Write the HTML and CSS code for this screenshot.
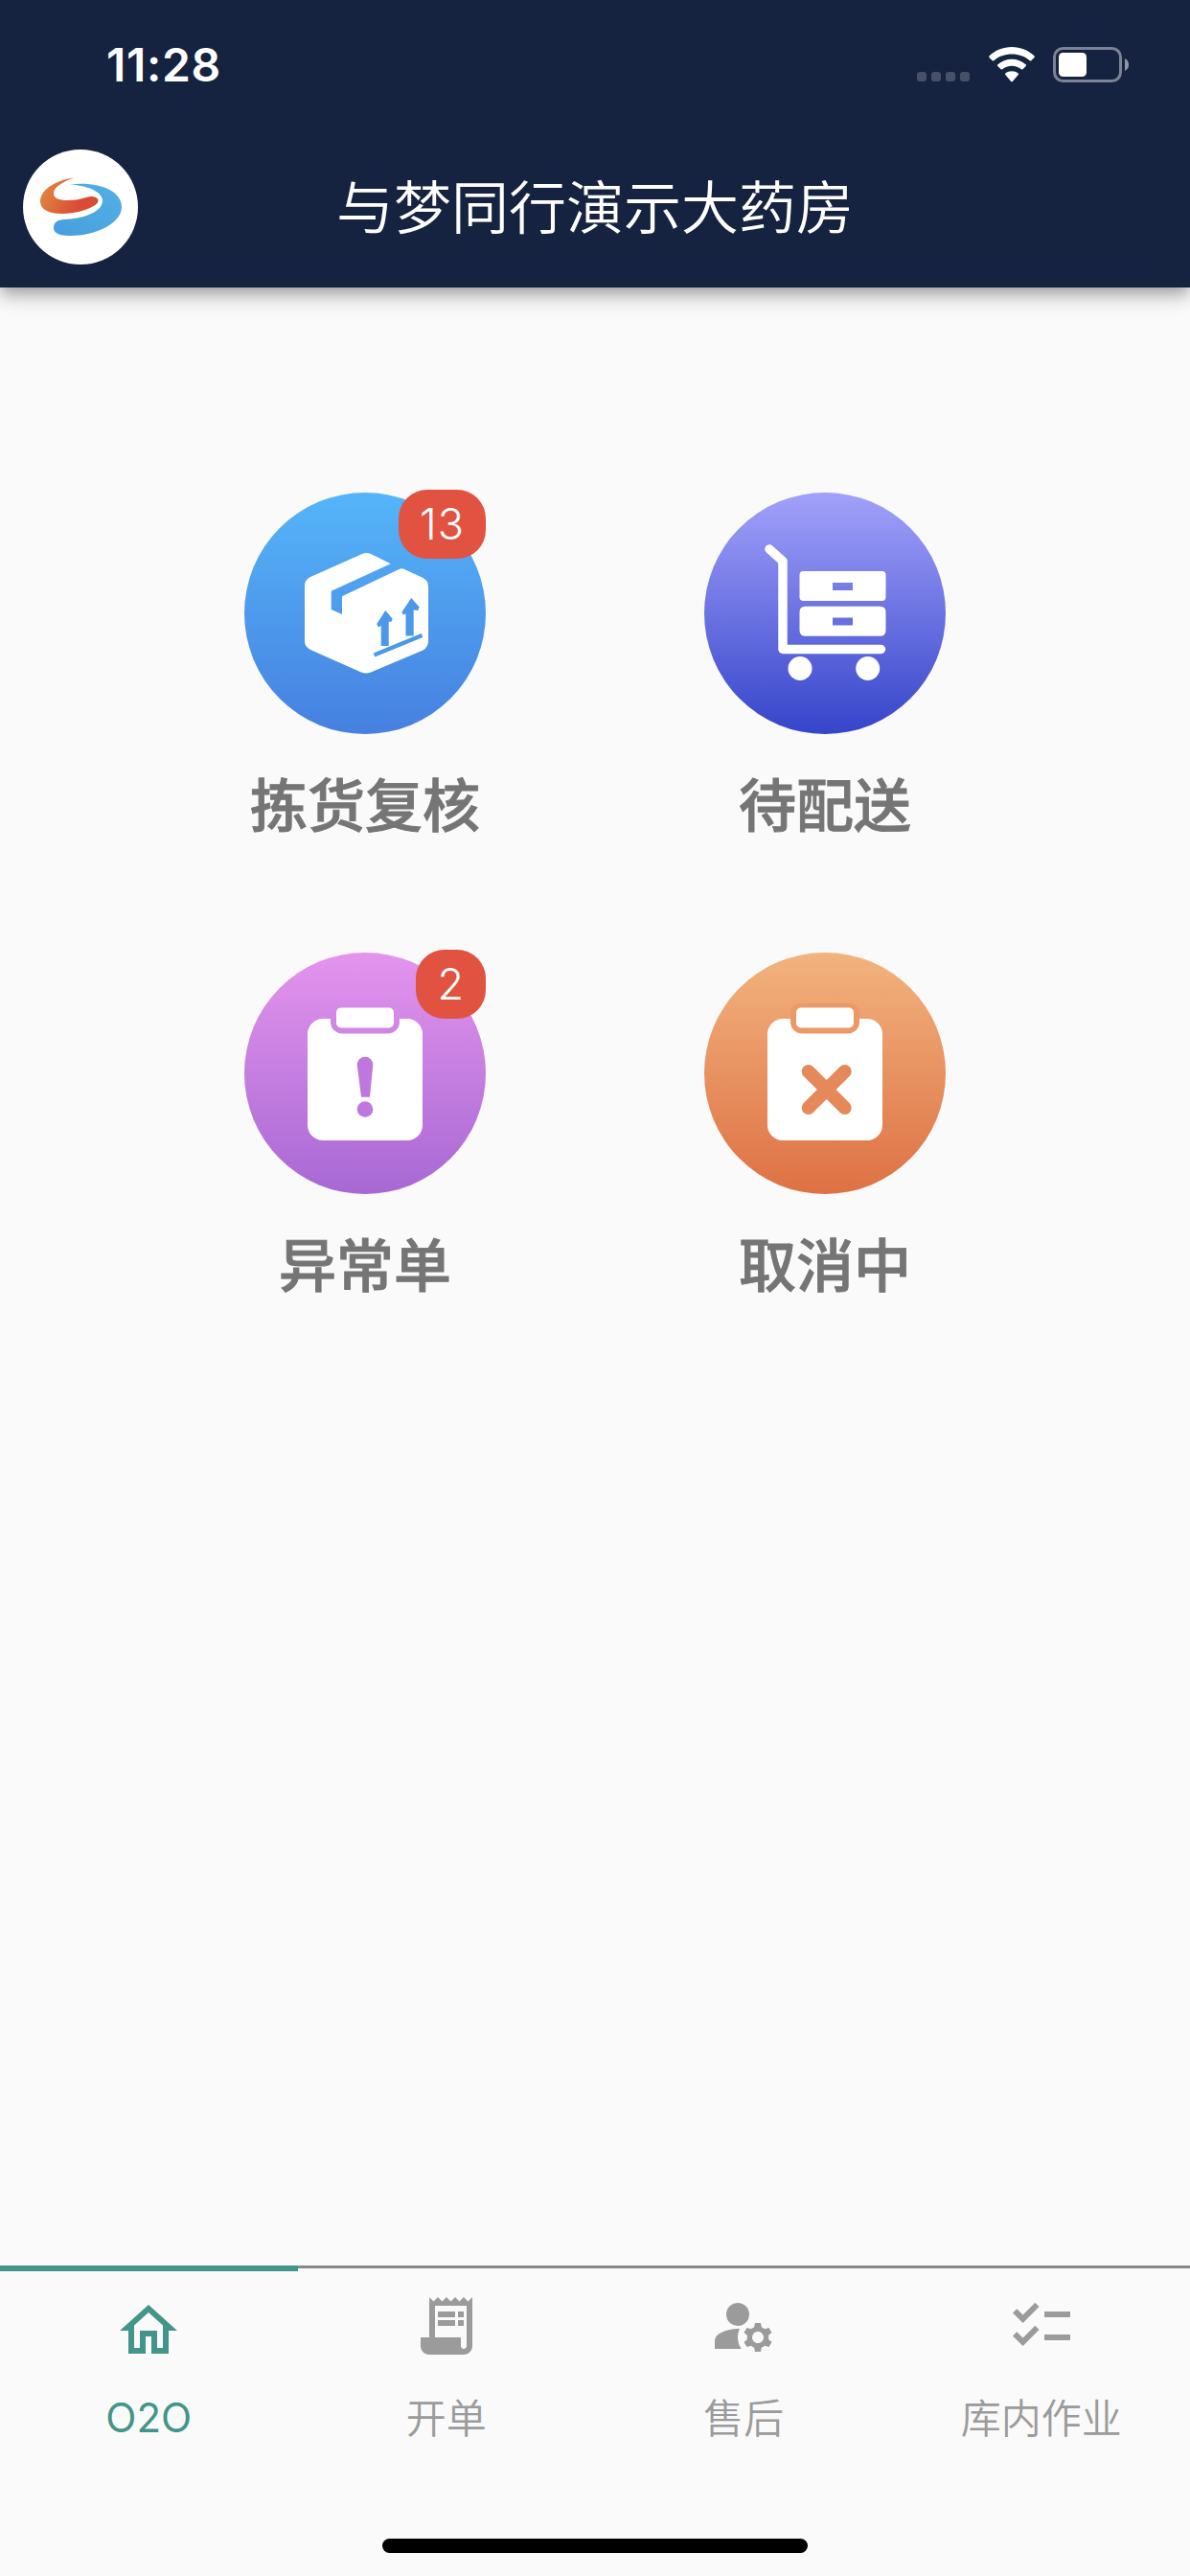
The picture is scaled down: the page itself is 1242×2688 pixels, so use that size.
FILE: index.html
```html
<!DOCTYPE html>
<html lang="zh-CN">
<head>
<meta charset="utf-8">
<title>与梦同行演示大药房</title>
<link rel="stylesheet" href="styles.css">
</head>
<body>
<div class="app">
  <header class="header">
    <div class="status">
      <span class="time">11:28</span>
      <div class="status-icons">
        <svg class="dots" width="56" height="38" viewBox="0 0 56 38"><g fill="#475069"><rect x="0" y="26" width="10" height="10" rx="3"/><rect x="15" y="26" width="10" height="10" rx="3"/><rect x="30" y="26" width="10" height="10" rx="3"/><rect x="45" y="26" width="10" height="10" rx="3"/></g></svg>
        <svg class="wifi" width="48" height="38" viewBox="0 0 48 38" fill="#fff"><path d="M24 0C33 0 41.500 3.600 47.400 9.300c.6.600.6 1 .1 1.600l-3.200 3.300c-.5.500-1 .5-1.500 0C37.700 9.500 31 7.400 24 7.400S10.300 9.500 5.200 14.200c-.5.500-1 .5-1.500 0L.5 10.900c-.5-.6-.5-1 .1-1.600C6.500 3.600 15 0 24 0z"/><path d="M24 12.700c5.500 0 10.600 2 14.600 5.600.6.600.6 1.100.1 1.600l-3.300 3.300c-.5.500-1 .5-1.600 0C31.200 21 27.700 19.800 24 19.800s-7.200 1.200-9.800 3.400c-.6.500-1.100.5-1.600 0l-3.300-3.300c-.5-.5-.5-1 .1-1.600 4-3.600 9.100-5.600 14.600-5.600z"/><path d="M24 25.200c2.500 0 4.800.8 6.600 2.300.6.500.5 1.100.1 1.600l-5.700 6.600c-.6.700-1.400.7-2 0l-5.700-6.600c-.4-.5-.5-1.100.1-1.600 1.800-1.500 4.100-2.300 6.600-2.300z"/></svg>
        <svg class="battery" width="80" height="38" viewBox="0 0 80 38"><rect x="1.500" y="1.500" width="69" height="34" rx="9" fill="none" stroke="#7b8394" stroke-width="3"/><rect x="6" y="6" width="29" height="25" rx="4.500" fill="#fff"/><path d="M75 12v13q4-2 4-6.500T75 12z" fill="#8f96a3"/></svg>
      </div>
    </div>
    <div class="toolbar">
      <svg class="logo" width="120" height="120" viewBox="0 0 120 120">
        <defs>
          <linearGradient id="flame" x1="0" x2="1" y1=".3" y2=".6"><stop offset=".1" stop-color="#e0803f"/><stop offset=".75" stop-color="#d94b35"/></linearGradient>
          <linearGradient id="wave" x1="1" x2="0" y1="0" y2="1"><stop stop-color="#54b0e2"/><stop offset="1" stop-color="#479ee0"/></linearGradient>
        </defs>
        <circle cx="60" cy="60" r="60" fill="#fff"/>
        <path d="M53 29.500C31 33 18 43 18 54.500c0 8 9 12.500 23 12.500 13 0 26-4 33.500-8.500C82 54 78 49 71 49c-5 0-10 4-25 4-9 0-14-2-14-7.500C32 39 43 33 53 29.500z" fill="url(#flame)"/>
        <path d="M49 36.500C79 33 103 43 103 60c0 17-27 30-54 30-12 0-17-3-17-8.500 0-5 4-8.500 11-8.500 18-.5 39-7 40-19C83.500 45 70 38 49 36.500z" fill="url(#wave)"/>
      </svg>
      <h1 class="title">与梦同行演示大药房</h1>
    </div>
  </header>

  <main class="grid">
    <a class="tile">
      <span class="disc disc-blue">
        <svg width="252" height="252" viewBox="0 0 252 252">
          <path fill="#fff" d="M123 64q4-2 9 0l20.700 10.300-62 28.400V122l11.300 5v-18.700l60-28.600q2-1 4.500 0L186.500 89q5.500 3 5.500 9v57q0 6-5.500 9.500L132 187.500q-5 2-10 0L69 164q-6-3-6-9V97q0-6 6-9z"/>
          <path fill="#4c98ea" d="M147.300 123l7.400 8.700-1.500 3.300-2.500-.5V160h-8v-21l-3 1.500-1.500-3.500zM174.300 110l8.400 9.500-1.500 3.500-4.500-.5v27h-8.200v-23l-3 1-1-3z"/>
          <path stroke="#4c98ea" stroke-width="4.500" d="M135.500 169.500l50-20.500"/>
        </svg>
        <span class="badge">13</span>
      </span>
      <span class="label">拣货复核</span>
    </a>
    <a class="tile">
      <span class="disc disc-indigo">
        <svg width="252" height="252" viewBox="0 0 252 252">
          <path fill="none" stroke="#fff" stroke-width="9.500" stroke-linecap="round" stroke-linejoin="round" d="M68 59l14 12.500v92h102.500"/>
          <path fill="#fff" fill-rule="evenodd" d="M103.500 82h82q4 0 4 4v23q0 4-4 4h-82q-4 0-4-4V86q0-4 4-4zm30.500 12v8h21v-8zM105.500 118.700h78q6 0 6 6v19q0 6-6 6h-78q-6 0-6-6v-19q0-6 6-6zm28.500 11.800v8h21v-8z"/>
          <circle cx="100" cy="183.500" r="12.500" fill="#fff"/><circle cx="170.700" cy="183.500" r="12.500" fill="#fff"/>
        </svg>
      </span>
      <span class="label">待配送</span>
    </a>
    <a class="tile">
      <span class="disc disc-pink">
        <svg width="252" height="252" viewBox="0 0 252 252">
          <path fill="#fff" d="M82 69h8v3a12 12 0 0 0 12 12.500h48A12 12 0 0 0 162 72v-3h8a16 16 0 0 1 16 16v95a16 16 0 0 1-16 16H82a16 16 0 0 1-16-16V85a16 16 0 0 1 16-16z"/>
          <rect x="96" y="57.500" width="60" height="21" rx="5" fill="#fff"/>
          <path fill="#bd77df" d="M117.700 117a8.300 8.300 0 0 1 16.600 0L131 150.700h-9z"/><circle cx="126" cy="163.500" r="8.300" fill="#bd77df"/>
        </svg>
        <span class="badge">2</span>
      </span>
      <span class="label">异常单</span>
    </a>
    <a class="tile">
      <span class="disc disc-orange">
        <svg width="252" height="252" viewBox="0 0 252 252">
          <rect x="90" y="53" width="72" height="31" rx="10" fill="#ec9966"/>
          <path fill="#fff" d="M82 69h8v3a12 12 0 0 0 12 12.500h48A12 12 0 0 0 162 72v-3h8a16 16 0 0 1 16 16v95a16 16 0 0 1-16 16H82a16 16 0 0 1-16-16V85a16 16 0 0 1 16-16z"/>
          <rect x="96" y="57.500" width="60" height="21" rx="5" fill="#fff"/>
          <path stroke="#e5895a" stroke-width="14" stroke-linecap="round" d="M108.700 124l38 38m0-38l-38 38"/>
        </svg>
      </span>
      <span class="label">取消中</span>
    </a>
  </main>

  <nav class="tabs">
    <a class="tab active">
      <svg class="tab-icon" viewBox="0 0 24 24"><path d="M12 5.690l5 4.500V18h-2v-6H9v6H7v-7.810l5-4.500M12 3L2 12h3v8h6v-6h2v6h6v-8h3L12 3z"/></svg>
      <span class="tab-label">O2O</span>
    </a>
    <a class="tab">
      <svg class="tab-icon" viewBox="0 0 24 24"><path d="M19.500 3.500L18 2l-1.500 1.500L15 2l-1.500 1.500L12 2l-1.500 1.500L9 2 7.500 3.500 6 2v14H3v3c0 1.660 1.340 3 3 3h12c1.660 0 3-1.340 3-3V2l-1.500 1.500zM19 19c0 .55-.45 1-1 1s-1-.45-1-1v-3H8V5h11v14z"/><path d="M9 7h6v2H9zM16 7h2v2h-2zM9 10h6v2H9zM16 10h2v2h-2z"/></svg>
      <span class="tab-label">开单</span>
    </a>
    <a class="tab">
      <svg class="tab-icon" viewBox="0 0 24 24"><circle cx="10" cy="8" r="4"/><path d="M10.670 13.020C10.450 13.010 10.230 13 10 13c-2.420 0-4.680.67-6.610 1.820C2.510 15.340 2 16.320 2 17.350V20h9.260C10.470 18.870 10 17.490 10 16c0-1.070.25-2.070.67-2.980zM20.750 16c0-.22-.03-.42-.06-.63l1.140-1.010-1-1.730-1.450.49c-.32-.27-.68-.48-1.080-.63L18 11h-2l-.3 1.490c-.4.150-.76.360-1.080.63l-1.450-.49-1 1.730 1.140 1.010c-.03.210-.06.410-.06.630s.03.420.06.630l-1.140 1.010 1 1.730 1.450-.49c.32.270.68.480 1.080.63L16 21h2l.3-1.490c.4-.15.760-.36 1.080-.63l1.450.49 1-1.730-1.140-1.010c.03-.21.060-.41.060-.63zM17 18c-1.100 0-2-.9-2-2s.9-2 2-2 2 .9 2 2-.9 2-2 2z"/></svg>
      <span class="tab-label">售后</span>
    </a>
    <a class="tab">
      <svg class="tab-icon" viewBox="0 0 24 24"><path d="M22 7h-9v2h9V7zm0 8h-9v2h9v-2zM5.540 11L2 7.460l1.410-1.410 2.120 2.120 4.240-4.240 1.410 1.410L5.540 11zm0 8L2 15.460l1.410-1.410 2.120 2.120 4.240-4.240 1.410 1.410L5.540 19z"/></svg>
      <span class="tab-label">库内作业</span>
    </a>
  </nav>
  <div class="home-indicator"></div>
</div>
</body>
</html>
```
FILE: styles.css
```css
* { box-sizing: border-box; }
body {
  margin: 0;
  background: #fafafa;
  font-family: Inter, "Noto Sans CJK SC", sans-serif;
}
svg { display: block; flex: none; }
.app {
  display: flex;
  flex-direction: column;
  width: 1242px;
  height: 2688px;
  overflow: hidden;
}
.header {
  height: 300px;
  flex: none;
  background: #162340;
  color: #fff;
  box-shadow: 0 6px 12px -3px rgba(0, 0, 0, .2), 0 12px 15px rgba(0, 0, 0, .14), 0 3px 30px rgba(0, 0, 0, .12);
}
.status {
  display: flex;
  justify-content: space-between;
  height: 132px;
  padding: 0 63px 0 111px;
}
.time {
  padding-top: 39px;
  font-size: 48px;
  line-height: 58px;
  font-weight: 600;
  letter-spacing: .7px;
}
.status-icons { display: flex; padding-top: 49px; }
.wifi { margin-left: 19px; }
.battery { margin-left: 19px; }
.toolbar {
  display: grid;
  grid-template-columns: 120px 1fr 120px;
  align-items: center;
  height: 168px;
  padding: 0 24px;
}
.title {
  margin: 0;
  padding-top: 1px;
  text-align: center;
  font-size: 60px;
  line-height: 84px;
  font-weight: 350;
}
.grid {
  display: grid;
  grid-template-columns: 480px 480px;
  grid-auto-rows: 480px;
  justify-content: center;
  flex: 1;
  padding-top: 214px;
}
.tile {
  display: flex;
  flex-direction: column;
  align-items: center;
}
.disc {
  position: relative;
  width: 252px;
  height: 252px;
  border-radius: 50%;
}
.disc-blue { background: linear-gradient(#55b5f9, #4680e0); }
.disc-indigo { background: linear-gradient(#a2a1fa, #3545ca); }
.disc-pink { background: linear-gradient(#e494ed, #a768d4); }
.disc-orange { background: linear-gradient(#f2b37e, #de7144); }
.badge {
  position: absolute;
  top: -3px;
  right: 0;
  min-width: 72px;
  height: 72px;
  padding: 0 22px;
  border-radius: 30px;
  background: #e15241;
  color: #fff;
  text-align: center;
  font-size: 45px;
  line-height: 72px;
  font-weight: 350;
  letter-spacing: 1px;
}
.label {
  margin-top: 33px;
  color: #757575;
  font-size: 60px;
  line-height: 84px;
  font-weight: 500;
  -webkit-text-stroke: .9px #757575;
}
.tabs {
  display: grid;
  grid-template-columns: repeat(4, 1fr);
  height: 285px;
  flex: none;
  border-top: 3px solid #888;
}
.tab {
  display: flex;
  flex-direction: column;
  align-items: center;
  padding-top: 24px;
  color: #9b9b9b;
  fill: currentColor;
}
.tab-icon { width: 72px; height: 72px; }
.tab-label {
  margin-top: 31px;
  font-size: 42px;
  line-height: 60px;
  font-weight: 350;
}
.tab.active {
  margin-top: -3px;
  padding-top: 26px;
  border-top: 6px solid #429588;
  color: #429588;
}
.active .tab-label { margin-top: 25px; font-weight: 400; }
.home-indicator {
  flex: none;
  width: 444px;
  height: 15px;
  margin: 0 auto 24px;
  border-radius: 8px;
  background: #000;
}
```
